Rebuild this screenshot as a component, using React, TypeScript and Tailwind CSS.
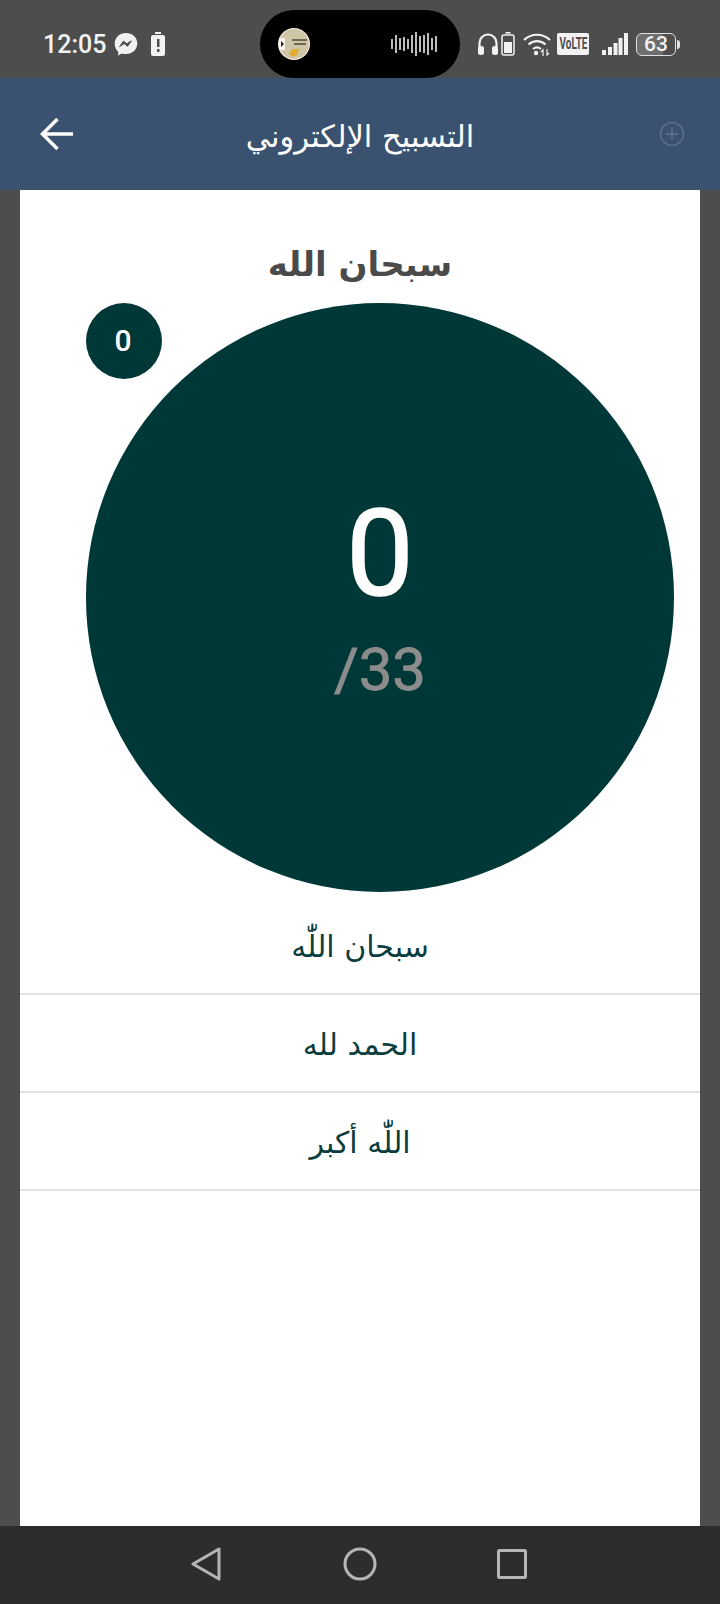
const rows = ["سبحان اللّٰه", "الحمد لله", "اللّٰه أكبر"];
const wave = [10, 18, 12, 14, 10, 18, 24, 16, 18, 22, 12, 16];

function StatusBar() {
  return (
    <div className="flex h-[78px] bg-[#4d4d4d] text-[#f2f2f2]">
      {/* Left side */}
      <div className="flex w-[260px] items-center pl-[43px] pt-[10px]">
        <span className="font-['Roboto',sans-serif] text-[25px] font-medium leading-none">12:05</span>
        <svg width="24" height="24" viewBox="0 0 24 24" className="ml-[8px]">
          <path d="M12 1C5.6 1 .7 5.6.7 11.8c0 3.2 1.3 6 3.5 7.900v3.700l3.400-1.900c1.400.4 2.900.6 4.400.6 6.400 0 11.300-4.600 11.300-10.800C23.300 5.600 18.400 1 12 1z" fill="currentColor" />
          <path d="M5.600 14.500l3.900-5.400 3.300 2.700 4.600-2.900-3.900 5.400-3.300-2.700z" fill="#4d4d4d" stroke="#4d4d4d" strokeWidth="1" />
        </svg>
        <svg width="14" height="24" viewBox="0 0 14 24" className="ml-[13px]">
          <rect x="4" y="0" width="6" height="2" fill="currentColor" />
          <rect x="0" y="3" width="14" height="21" rx="2" fill="currentColor" />
          <rect x="6" y="7" width="2.500" height="8" fill="#4d4d4d" />
          <rect x="6" y="17" width="2.500" height="3" fill="#4d4d4d" />
        </svg>
      </div>

      {/* Camera pill */}
      <div className="mt-[10px] flex h-[68px] w-[200px] items-center justify-between rounded-[34px] bg-black pl-[18px] pr-[21px]">
        <svg width="32" height="32" viewBox="0 0 32 32">
          <circle cx="16" cy="16" r="16" fill="#f4efe2" />
          <circle cx="16" cy="16" r="15" fill="#cfc6a8" />
          <path d="M14 11h15v2H14zM16 15h12v2H16z" fill="#6f6a58" />
          <path d="M1 10h6v12H1z" fill="#f5f3ea" />
          <path d="M3 13l3 3-3 3z" fill="#222222" />
          <path d="M11 26l3-5h7l-2 6-4 2z" fill="#e0ad32" />
        </svg>
        <svg width="50" height="24" viewBox="0 0 50 24">
          {wave.map((h, i) => (
            <rect key={i} x={2 + i * 4} y={12 - h / 2} width="2" height={h} fill="#bdbdbd" />
          ))}
        </svg>
      </div>

      {/* Right side */}
      <div className="flex flex-1 items-center pl-[17px] pt-[10px]">
        <svg width="22" height="24" viewBox="0 0 22 24" fill="none">
          <path d="M2.500 16V11a8.500 8.500 0 0 1 17 0v5" stroke="currentColor" strokeWidth="2.200" />
          <rect x="1" y="14" width="6" height="9" rx="2.500" fill="currentColor" />
          <rect x="15" y="14" width="6" height="9" rx="2.500" fill="currentColor" />
        </svg>
        <svg width="14" height="24" viewBox="0 0 14 24" fill="none" className="ml-[2px]">
          <rect x="4.500" y="0" width="5" height="1.600" fill="currentColor" />
          <rect x="1" y="3" width="12" height="20" rx="2" stroke="currentColor" strokeWidth="1.500" />
          <rect x="3" y="10" width="8" height="11" fill="currentColor" />
        </svg>
        <svg width="28" height="24" viewBox="0 0 28 24" fill="none" className="ml-[8px]">
          <path d="M1 8c7.500-7 18.500-7 26 0" stroke="currentColor" strokeWidth="2.200" />
          <path d="M5.500 12.500c5-4.500 12-4.500 17 0" stroke="currentColor" strokeWidth="2.200" />
          <path d="M10 17c2.500-2 5.500-2 8 0" stroke="currentColor" strokeWidth="2.200" />
          <circle cx="13" cy="21" r="2.200" fill="currentColor" />
          <path d="M20 24v-6l-2 2M24 17v6l2-2" stroke="currentColor" strokeWidth="1.200" />
        </svg>
        <div className="ml-[6px] flex h-[22px] w-[32px] items-center justify-center overflow-hidden rounded-[2px] bg-[#f2f2f2] font-['Roboto',sans-serif] text-[16px] font-bold leading-none text-[#4d4d4d]">
          <span className="scale-x-[0.62]">VoLTE</span>
        </div>
        <svg width="26" height="24" viewBox="0 0 26 24" className="ml-[13px]">
          <rect x="0" y="18" width="4" height="5" fill="currentColor" />
          <rect x="6" y="15" width="4" height="8" fill="currentColor" />
          <rect x="11.500" y="11" width="4" height="12" fill="currentColor" />
          <rect x="16.500" y="6" width="4" height="17" fill="currentColor" />
          <rect x="22" y="1" width="4" height="22" fill="currentColor" />
        </svg>
        <div className="ml-[8px] flex h-[23px] w-[40px] items-center justify-center rounded-[6px] border-[1.500px] border-[#e0e0e0] bg-[linear-gradient(90deg,#6e6e6e_68%,transparent_68%)] font-['Roboto',sans-serif] text-[21px] font-medium leading-none">
          63
        </div>
        <div className="ml-[1px] h-[9px] w-[3px] rounded-r-sm bg-[#e0e0e0]" />
      </div>
    </div>
  );
}

function Header() {
  return (
    <div className="flex h-[112px] items-center justify-between bg-[#3a526f] pl-[40px] pr-[36px]">
      <svg width="34" height="34" viewBox="0 0 34 34" fill="none" stroke="#ffffff" strokeWidth="3.500">
        <path d="M33 17H3M17.500 2 2.500 17l15 15" />
      </svg>
      <h1 dir="rtl" className="mr-[14px] pt-[6px] font-['DejaVu_Sans',sans-serif] text-[30.500px] font-normal leading-none text-white">
        التسبيح الإلكتروني
      </h1>
      <svg width="24" height="24" viewBox="0 0 24 24" fill="none" stroke="#65709a" strokeWidth="1.300">
        <circle cx="12" cy="12" r="11.300" />
        <path d="M12 6v12M6 12h12" />
      </svg>
    </div>
  );
}

function Counter() {
  return (
    <div className="relative mx-[66px] mt-[17px] flex h-[589px] w-[588px] flex-col items-center justify-center rounded-full bg-[#003838] font-['Roboto',sans-serif]">
      <div className="absolute left-0 top-0 flex h-[76px] w-[76px] items-center justify-center rounded-full bg-[#003838] pb-[2px] pr-[2px] text-[30px] font-medium text-white">
        0
      </div>
      <div className="text-[120px] leading-[120px] text-white [-webkit-text-stroke:1.500px_#ffffff]">0</div>
      <div className="mt-[25px] text-[60px] leading-[62px] text-[#8c8c8c] [-webkit-text-stroke:0.800px_#8c8c8c]">/33</div>
    </div>
  );
}

function NavBar() {
  return (
    <div className="flex h-[78px] items-center bg-[#2d2d2d] pb-[2px] text-[#b5b5b5]">
      <div className="flex w-full items-center justify-between pl-[191px] pr-[193px]">
        <svg width="30" height="34" viewBox="0 0 30 34" fill="none" stroke="currentColor" strokeWidth="3" strokeLinejoin="round">
          <path d="M28 2v30L2 17z" />
        </svg>
        <svg width="34" height="34" viewBox="0 0 34 34" fill="none" stroke="currentColor" strokeWidth="3" className="ml-[2px]">
          <circle cx="17" cy="17" r="15" />
        </svg>
        <svg width="30" height="30" viewBox="0 0 30 30" fill="none" stroke="currentColor" strokeWidth="3" strokeLinejoin="round">
          <rect x="1.500" y="1.500" width="27" height="27" rx="1" />
        </svg>
      </div>
    </div>
  );
}

export default function App() {
  return (
    <div className="flex h-[1604px] w-[720px] flex-col overflow-hidden bg-[#4d4d4d]">
      <StatusBar />
      <Header />
      <div className="mx-[20px] flex-1 bg-white">
        <h2 dir="rtl" className="mt-[52px] text-center font-['DejaVu_Sans',sans-serif] text-[34px] font-bold leading-[44px] text-[#4a4a4a]">
          سبحان الله
        </h2>
        <Counter />
        <div className="mt-[5px]">
          {rows.map((row) => (
            <div
              key={row}
              dir="rtl"
              className="flex h-[98px] items-center justify-center border-b-2 border-[#e2e2e2] pt-[2px] font-['DejaVu_Sans',sans-serif] text-[30px] text-[#0a3d3d]"
            >
              {row}
            </div>
          ))}
        </div>
      </div>
      <NavBar />
    </div>
  );
}
